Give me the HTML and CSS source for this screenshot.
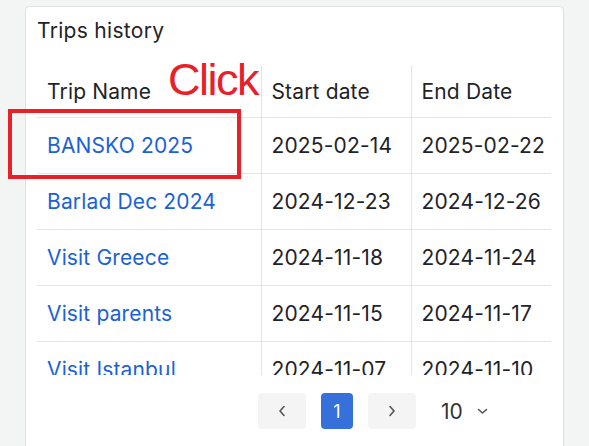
FILE: index.html
```html
<!DOCTYPE html>
<html>
<head>
<meta charset="utf-8">
<link rel="stylesheet" href="styles.css">
</head>
<body>
<div class="page">
  <div class="card">
    <h2 class="title">Trips history</h2>
    <div class="table-wrap">
      <table class="trips">
        <colgroup>
          <col class="c1"><col class="c2"><col class="c3">
        </colgroup>
        <thead>
          <tr><th>Trip Name</th><th>Start date</th><th>End Date</th></tr>
        </thead>
        <tbody>
          <tr><td><a href="#">BANSKO 2025</a></td><td>2025-02-14</td><td>2025-02-22</td></tr>
          <tr><td><a href="#">Barlad Dec 2024</a></td><td>2024-12-23</td><td>2024-12-26</td></tr>
          <tr><td><a href="#">Visit Greece</a></td><td>2024-11-18</td><td>2024-11-24</td></tr>
          <tr><td><a href="#">Visit parents</a></td><td>2024-11-15</td><td>2024-11-17</td></tr>
          <tr><td><a href="#">Visit Istanbul</a></td><td>2024-11-07</td><td>2024-11-10</td></tr>
        </tbody>
      </table>
    </div>
    <div class="pager">
      <button class="pg-btn nav" aria-label="Previous">
        <svg width="8" height="12" viewBox="0 0 8 12"><path d="M6 1.5 L2 6 L6 10.5" fill="none" stroke="#555" stroke-width="1.6" stroke-linecap="round" stroke-linejoin="round"/></svg>
      </button>
      <button class="pg-btn active">1</button>
      <button class="pg-btn nav" aria-label="Next">
        <svg width="8" height="12" viewBox="0 0 8 12"><path d="M2 1.5 L6 6 L2 10.5" fill="none" stroke="#555" stroke-width="1.6" stroke-linecap="round" stroke-linejoin="round"/></svg>
      </button>
      <div class="size">
        <span>10</span>
        <svg width="11" height="7" viewBox="0 0 11 7"><path d="M1.5 1.5 L5.5 5 L9.5 1.5" fill="none" stroke="#555" stroke-width="1.6" stroke-linecap="round" stroke-linejoin="round"/></svg>
      </div>
    </div>
  </div>
  <div class="annot-text">Click</div>
  <div class="annot-box"></div>
</div>
</body>
</html>
```

FILE: styles.css
```css
* { box-sizing: border-box; }
html, body {
  margin: 0;
  padding: 0;
  background: #f3f4f4;
  font-family: Inter, "Noto Sans", sans-serif;
  color: #1f2328;
}
.page {
  position: relative;
  width: 589px;
  height: 446px;
  overflow: hidden;
  padding: 6px 25px 0 25px;
}
.card {
  background: #fff;
  border: 1px solid #e0e0e0;
  border-radius: 4px;
  height: 460px;
  padding: 11px 11px;
}
.title {
  margin: 0;
  font-size: 21px;
  letter-spacing: 0.3px;
  font-weight: 400;
  line-height: 24px;
  padding-top: 1px;
  color: #1f2328;
}
.table-wrap {
  margin-top: 23px;
  height: 309px;
  overflow: hidden;
}
.trips {
  border-collapse: collapse;
  table-layout: fixed;
  width: 514px;
  font-size: 21px;
  letter-spacing: 0.15px;
}
.c1 { width: 224px; }
.c2 { width: 150px; }
.c3 { width: 140px; }
.trips th, .trips td {
  text-align: left;
  font-weight: 400;
  padding: 0 10px;
  border-bottom: 1px solid #e4e4e4;
  white-space: nowrap;
  overflow: hidden;
}
.trips th + th, .trips td + td {
  border-left: 1px solid #e4e4e4;
}
.trips th {
  height: 51px;
  padding-top: 1px;
}
.trips td {
  height: 56px;
}
.trips a {
  color: #1b62d6;
  text-decoration: none;
}
.pager {
  display: flex;
  align-items: center;
  margin-top: 18px;
  padding-left: 221px;
  gap: 15px;
}
.pg-btn {
  height: 36px;
  border: none;
  border-radius: 4px;
  display: flex;
  align-items: center;
  justify-content: center;
  font-family: inherit;
  padding: 0;
}
.pg-btn.nav {
  width: 48px;
  background: #f4f4f4;
}
.pg-btn.active {
  width: 32px;
  background: #3570db;
  color: #fff;
  font-size: 18px;
}
.size {
  display: flex;
  align-items: center;
  gap: 14px;
  margin-left: 10px;
  font-size: 21px;
  color: #333;
}
.annot-text {
  position: absolute;
  left: 168px;
  top: 55px;
  font-family: "Liberation Sans", Arial, sans-serif;
  font-size: 45px;
  line-height: 50px;
  color: #e8202a;
  letter-spacing: -1.5px;
}
.annot-box {
  position: absolute;
  left: 8px;
  top: 109px;
  width: 233px;
  height: 70px;
  border: 4px solid #e8202a;
}
```
